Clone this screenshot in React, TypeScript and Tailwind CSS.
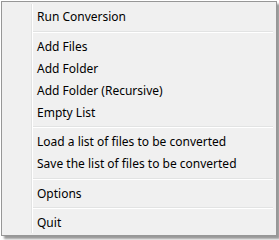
const items: (string | null)[] = [
  "Run Conversion",
  null,
  "Add Files",
  "Add Folder",
  "Add Folder (Recursive)",
  "Empty List",
  null,
  "Load a list of files to be converted",
  "Save the list of files to be converted",
  null,
  "Options",
  null,
  "Quit",
];

const App = () => {
  return (
    <div className="h-[240px] w-[279px] bg-white">
      <div className="ml-[1px] mt-[1px] flex h-[235px] w-[276px] border border-[#979797] bg-[#f0f0f0] p-[1px] shadow-[3px_3px_2px_rgba(0,0,0,0.4)] font-['Noto_Sans',sans-serif] text-[12px] text-black">
        <div className="w-[29px] shrink-0 border-r border-[#e2e3e3] shadow-[1px_0_0_#ffffff] my-[1px]" />
        <div className="ml-[1px] flex flex-1 flex-col pt-[3px] pr-[2px]">
          {items.map((label, i) =>
            label ? (
              <div key={i} className="h-[22px] pl-[4px] leading-[22px] whitespace-nowrap">
                {label}
              </div>
            ) : (
              <div key={i} className="flex h-[8px] items-center">
                <div className="h-[2px] w-full border-t border-[#e2e3e3] border-b border-b-white" />
              </div>
            ),
          )}
        </div>
      </div>
    </div>
  );
};

export default App;
